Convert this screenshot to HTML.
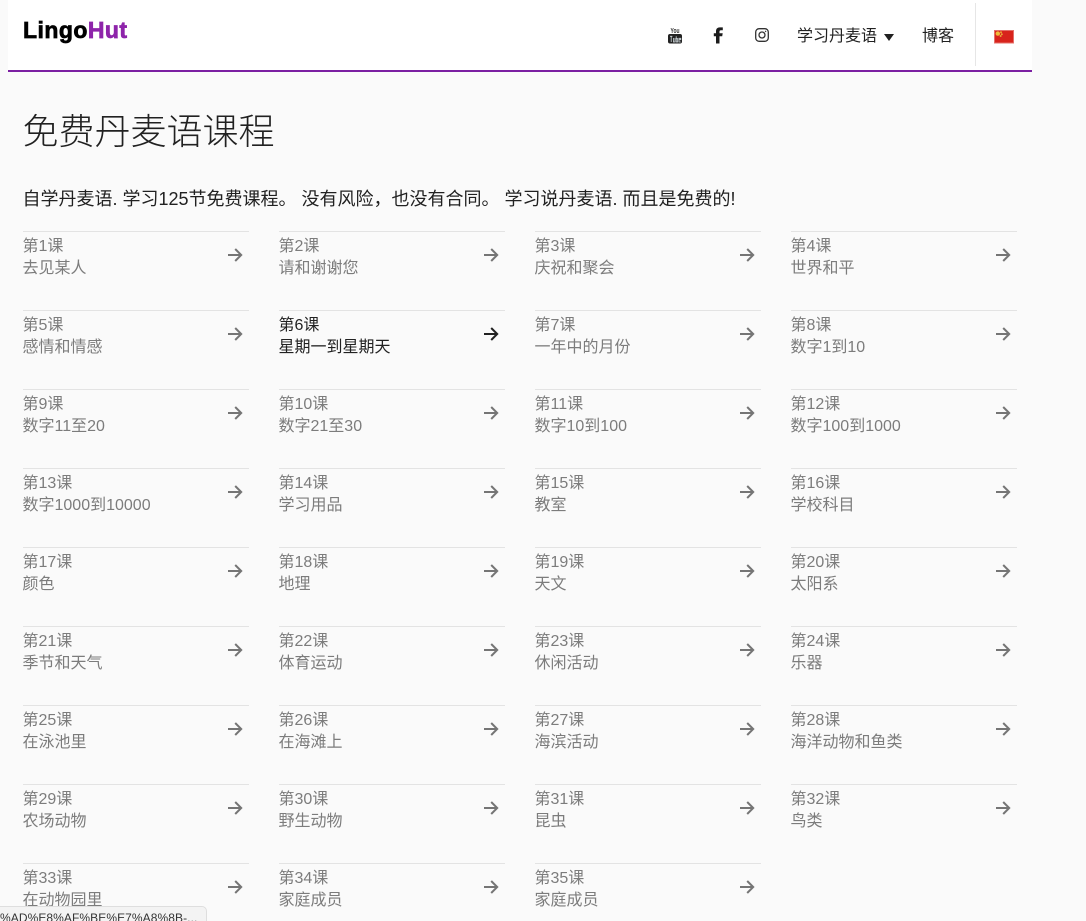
<!DOCTYPE html>
<html lang="zh">
<head>
<meta charset="utf-8">
<title>免费丹麦语课程</title>
<style>
html,body{margin:0;padding:0;width:1086px;height:921px;overflow:hidden;background:#fafafa;}
body{position:relative;font-family:"Liberation Sans","Noto Sans CJK SC",sans-serif;color:#212121;}
.hdr{position:absolute;left:8px;top:0;width:1024px;height:70px;background:#fff;border-bottom:2px solid #7b1fa2;}
.logo{position:absolute;left:23px;top:15px;font-size:23px;line-height:30px;font-weight:bold;color:#000;letter-spacing:.45px;-webkit-text-stroke:.7px currentColor;}
.logo span{color:#8e24aa;}
.nav{position:absolute;top:26px;font-size:16px;line-height:22px;color:#212121;white-space:nowrap;}
.tri{position:absolute;left:884px;top:34px;width:0;height:0;border-left:5px solid transparent;border-right:5px solid transparent;border-top:7px solid #212121;}
.sep{position:absolute;left:975px;top:3px;width:1px;height:63px;background:#e6e6e6;}
.ic{position:absolute;}
h1{position:absolute;left:22.5px;top:106px;margin:0;font-size:36px;line-height:52px;font-weight:300;color:#212121;white-space:nowrap;}
.lead{position:absolute;left:22.5px;top:186px;margin:0;font-size:18px;line-height:26px;color:#212121;white-space:nowrap;}
.grid{position:absolute;left:23px;top:231px;display:grid;grid-template-columns:repeat(4,226px);grid-auto-rows:79px;column-gap:30px;}
.it{position:relative;border-top:1px solid #e3e3e3;box-sizing:border-box;font-size:16px;line-height:22px;color:#7c7c7c;padding-top:4px;white-space:nowrap;text-indent:-.5px;}
.it div{height:22px;}
.it svg{position:absolute;left:203.5px;top:15px;color:#757575;}
.it.on{color:#212121;}
.it.on svg{color:#212121;}
.status{position:absolute;left:-6px;top:906px;width:213px;height:30px;background:#f3f3f3;border:1px solid #dedede;border-radius:0 5px 0 0;box-sizing:border-box;padding:2px 0 0 5px;font-size:12px;letter-spacing:.08px;line-height:18px;color:#333;overflow:hidden;white-space:nowrap;}
</style>
</head>
<body>
<div class="hdr"></div>
<div class="logo">Lingo<span>Hut</span></div>

<svg class="ic" style="left:668px;top:27px" width="14" height="17" viewBox="0 0 14 17">
<text x="7" y="6" font-family="Liberation Sans" font-size="7.5" font-weight="bold" text-anchor="middle" fill="#333" textLength="9" lengthAdjust="spacingAndGlyphs">You</text>
<rect x="0" y="7" width="14" height="9.5" rx="2" fill="#222"/>
<path d="M2 9.3h2.4M3.2 9.3v5.7M5.4 11v4h1.6v-4M8.2 9.2v5.8h1.5v-3.3H8.2M11 12.7h1.8v-1.4H11v3.7h1.8" stroke="#cfd8dc" stroke-width=".8" fill="none"/>
</svg>
<svg class="ic" style="left:713px;top:27px" width="11" height="17" viewBox="0 0 11 17">
<path d="M3 16.5V9.2H.8V6.3H3V4.2C3 1.8 4.5 .4 6.7 .4H9.8V3.2H7.9C6.9 3.2 6.5 3.7 6.5 4.6V6.3H9.7L9.2 9.2H6.5V16.5Z" fill="#1c1c1c"/>
</svg>
<svg class="ic" style="left:755px;top:28px" width="14" height="14" viewBox="0 0 14 14" fill="none" stroke="#333" stroke-width="1.3">
<rect x=".7" y=".7" width="12.6" height="12.6" rx="3.4"/>
<circle cx="7" cy="7" r="3"/>
<circle cx="10.6" cy="3.4" r=".5" fill="#333" stroke-width=".5"/>
</svg>

<div class="nav" style="left:797px">学习丹麦语</div>
<div class="tri"></div>
<div class="nav" style="left:922px">博客</div>
<div class="sep"></div>
<svg class="ic" style="left:994px;top:30px" width="20" height="13.5" viewBox="0 0 20 13.5">
<rect width="20" height="13.5" fill="#d8231c"/>
<rect x=".5" y=".5" width="19" height="12.5" fill="none" stroke="#e4706a" stroke-width="1"/>
<circle cx="3.8" cy="3.6" r="2.2" fill="#eebb3a"/>
<circle cx="7" cy="2.2" r="1" fill="#e8a83a"/>
<circle cx="7.8" cy="4.2" r="1" fill="#e8a83a"/>
<circle cx="6.6" cy="6" r="1" fill="#e8a83a"/>
</svg>

<h1>免费丹麦语课程</h1>
<p class="lead">自学丹麦语. 学习125节免费课程。 没有风险，也没有合同。 学习说丹麦语. 而且是免费的!</p>

<svg width="0" height="0" style="position:absolute"><defs><g id="a" fill="none" stroke="currentColor" stroke-width="2"><path d="M1 8H14.2M8.2 2L14.2 8L8.2 14"/></g></defs></svg>

<div class="grid">
<div class="it"><div>第1课</div><div>去见某人</div><svg width="16" height="16"><use href="#a"/></svg></div>
<div class="it"><div>第2课</div><div>请和谢谢您</div><svg width="16" height="16"><use href="#a"/></svg></div>
<div class="it"><div>第3课</div><div>庆祝和聚会</div><svg width="16" height="16"><use href="#a"/></svg></div>
<div class="it"><div>第4课</div><div>世界和平</div><svg width="16" height="16"><use href="#a"/></svg></div>
<div class="it"><div>第5课</div><div>感情和情感</div><svg width="16" height="16"><use href="#a"/></svg></div>
<div class="it on"><div>第6课</div><div>星期一到星期天</div><svg width="16" height="16"><use href="#a"/></svg></div>
<div class="it"><div>第7课</div><div>一年中的月份</div><svg width="16" height="16"><use href="#a"/></svg></div>
<div class="it"><div>第8课</div><div>数字1到10</div><svg width="16" height="16"><use href="#a"/></svg></div>
<div class="it"><div>第9课</div><div>数字11至20</div><svg width="16" height="16"><use href="#a"/></svg></div>
<div class="it"><div>第10课</div><div>数字21至30</div><svg width="16" height="16"><use href="#a"/></svg></div>
<div class="it"><div>第11课</div><div>数字10到100</div><svg width="16" height="16"><use href="#a"/></svg></div>
<div class="it"><div>第12课</div><div>数字100到1000</div><svg width="16" height="16"><use href="#a"/></svg></div>
<div class="it"><div>第13课</div><div>数字1000到10000</div><svg width="16" height="16"><use href="#a"/></svg></div>
<div class="it"><div>第14课</div><div>学习用品</div><svg width="16" height="16"><use href="#a"/></svg></div>
<div class="it"><div>第15课</div><div>教室</div><svg width="16" height="16"><use href="#a"/></svg></div>
<div class="it"><div>第16课</div><div>学校科目</div><svg width="16" height="16"><use href="#a"/></svg></div>
<div class="it"><div>第17课</div><div>颜色</div><svg width="16" height="16"><use href="#a"/></svg></div>
<div class="it"><div>第18课</div><div>地理</div><svg width="16" height="16"><use href="#a"/></svg></div>
<div class="it"><div>第19课</div><div>天文</div><svg width="16" height="16"><use href="#a"/></svg></div>
<div class="it"><div>第20课</div><div>太阳系</div><svg width="16" height="16"><use href="#a"/></svg></div>
<div class="it"><div>第21课</div><div>季节和天气</div><svg width="16" height="16"><use href="#a"/></svg></div>
<div class="it"><div>第22课</div><div>体育运动</div><svg width="16" height="16"><use href="#a"/></svg></div>
<div class="it"><div>第23课</div><div>休闲活动</div><svg width="16" height="16"><use href="#a"/></svg></div>
<div class="it"><div>第24课</div><div>乐器</div><svg width="16" height="16"><use href="#a"/></svg></div>
<div class="it"><div>第25课</div><div>在泳池里</div><svg width="16" height="16"><use href="#a"/></svg></div>
<div class="it"><div>第26课</div><div>在海滩上</div><svg width="16" height="16"><use href="#a"/></svg></div>
<div class="it"><div>第27课</div><div>海滨活动</div><svg width="16" height="16"><use href="#a"/></svg></div>
<div class="it"><div>第28课</div><div>海洋动物和鱼类</div><svg width="16" height="16"><use href="#a"/></svg></div>
<div class="it"><div>第29课</div><div>农场动物</div><svg width="16" height="16"><use href="#a"/></svg></div>
<div class="it"><div>第30课</div><div>野生动物</div><svg width="16" height="16"><use href="#a"/></svg></div>
<div class="it"><div>第31课</div><div>昆虫</div><svg width="16" height="16"><use href="#a"/></svg></div>
<div class="it"><div>第32课</div><div>鸟类</div><svg width="16" height="16"><use href="#a"/></svg></div>
<div class="it"><div>第33课</div><div>在动物园里</div><svg width="16" height="16"><use href="#a"/></svg></div>
<div class="it"><div>第34课</div><div>家庭成员</div><svg width="16" height="16"><use href="#a"/></svg></div>
<div class="it"><div>第35课</div><div>家庭成员</div><svg width="16" height="16"><use href="#a"/></svg></div>
</div>

<div class="status">%AD%E8%AF%BE%E7%A8%8B-...</div>
</body>
</html>
